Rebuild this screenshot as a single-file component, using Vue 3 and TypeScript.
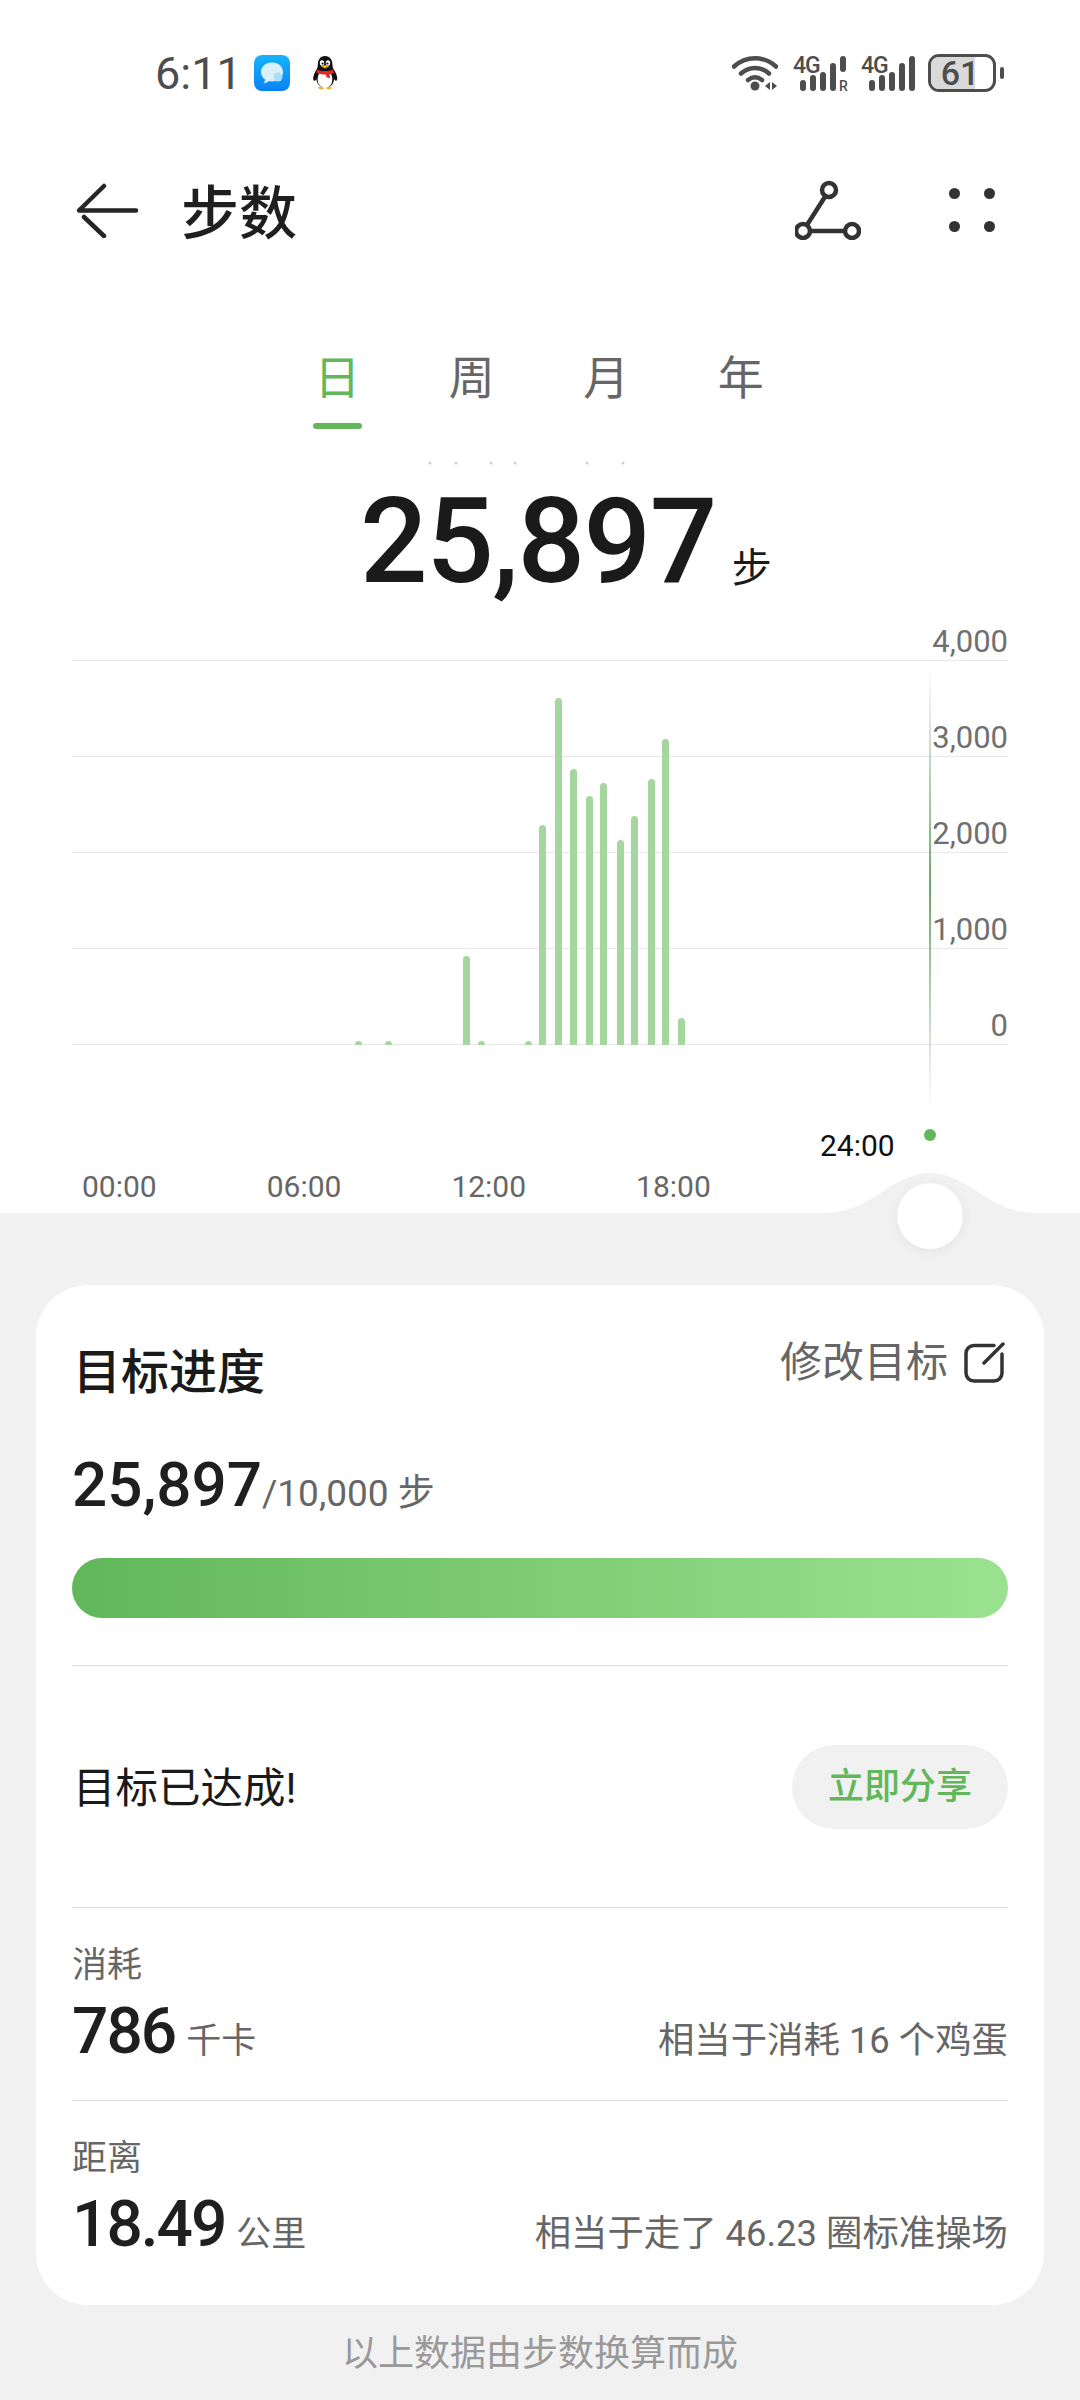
<template>
  <div class="page">
    <section class="top">
      <div class="status">
        <div class="status-left">
          <span class="time">6:11</span>
          <svg class="msg" width="36" height="36" viewBox="0 0 36 36">
            <defs>
              <linearGradient id="msgbg" x1="0" y1="0" x2="0" y2="1">
                <stop offset="0" stop-color="#16b4fb" />
                <stop offset="1" stop-color="#0a82f5" />
              </linearGradient>
            </defs>
            <rect width="36" height="36" rx="8" fill="url(#msgbg)" />
            <path d="M18 7.500c6.400 0 11 3.900 11 9.500s-4.600 9.500-11 9.500c-1 0-2-.1-3-.4-1.300 1.200-3.200 2-5.500 2.200 1-1.100 1.600-2.300 1.700-3.700C8.700 22.900 7 20.200 7 17c0-5.600 4.600-9.500 11-9.500z" fill="#d8f1fd" />
            <circle cx="24" cy="22" r="4.500" fill="#a9dffa" />
          </svg>
          <svg class="qq" width="28" height="36" viewBox="0 0 28 36">
            <path d="M14 1c5 0 7.500 4 7.500 9 0 1.500.3 2.500 1 4 2 3 4.500 8 3.500 11-.6 1.500-2 .5-2.800-.8-.5 3.500-2.200 6-4.200 7.300H9.500c-2-1.300-3.700-3.800-4.200-7.300C4.500 25.500 3 26.500 2.400 25 1.400 22 4 17 5.800 14c.7-1.500 1-2.500 1-4C6.800 5 9 1 14 1z" fill="#111" />
            <path d="M8.500 18c1-1.500 10-1.500 11 0 2 3 2.500 8 .8 11-1.300 2.500-3.800 3.300-6.300 3.300s-5-.8-6.300-3.300c-1.700-3-1.200-8 .8-11z" fill="#fff" />
            <ellipse cx="11" cy="8" rx="2.200" ry="2.800" fill="#fff" />
            <ellipse cx="17" cy="8" rx="2.200" ry="2.800" fill="#fff" />
            <circle cx="11.500" cy="8.500" r="1.100" fill="#111" />
            <circle cx="16.500" cy="8.500" r="1.100" fill="#111" />
            <path d="M9.500 11c2-1 7-1 9 0l-4.500 2.600z" fill="#f5b31f" />
            <path d="M6 14.500c4 2 12 2 16 0l1 3.300c-1.300.8-3 1.300-4.500 1.500l.5 4-3.500-1-.7-2.800c-3 .2-6.800-.3-9.300-1.700z" fill="#e8262a" />
            <path d="M7 32.500c2-1.200 5-1 6 .8-1 1.700-5 1.700-6-.8zM21 32.500c-2-1.200-5-1-6 .8 1 1.700 5 1.700 6-.8z" fill="#f5b31f" />
          </svg>
        </div>
        <div class="status-right">
          <svg class="wifi" width="46" height="36" viewBox="0 0 46 36">
            <path d="M2 11.500C14 .5 32 .5 44 11.500M9 18.500c8.500-7.500 19.500-7.500 28 0M16 25c4.500-3.500 9.500-3.500 14 0" fill="none" stroke="#4d4d4d" stroke-width="4.500" stroke-linecap="round" />
            <circle cx="23" cy="31" r="4.500" fill="#4d4d4d" />
            <path d="M38 27v8l-5-4zM40 27v8l5-4z" fill="#4d4d4d" />
          </svg>
          <svg width="56" height="45" viewBox="0 -4 56 45">
            <text x="0" y="18" class="net">4G</text>
            <rect x="7" y="25" width="6" height="11" rx="3" class="sig" />
            <rect x="17" y="20" width="6" height="16" rx="3" class="sig" />
            <rect x="27" y="17" width="6" height="19" rx="3" class="sig" />
            <rect x="37" y="8" width="6" height="28" rx="3" class="sig" />
            <rect x="47" y="1" width="6" height="16" rx="3" class="sig" />
            <text x="46" y="36" class="net-r">R</text>
          </svg>
          <svg width="55" height="45" viewBox="0 -4 55 45">
            <text x="0" y="18" class="net">4G</text>
            <rect x="8" y="25" width="6" height="11" rx="3" class="sig" />
            <rect x="18" y="20" width="6" height="16" rx="3" class="sig" />
            <rect x="28" y="17" width="6" height="19" rx="3" class="sig" />
            <rect x="38" y="8" width="6" height="28" rx="3" class="sig" />
            <rect x="48" y="1" width="6" height="35" rx="3" class="sig" />
          </svg>
          <div class="battery">
            <div class="battery-body">
              <div class="battery-fill"></div>
              <span class="battery-num">61</span>
            </div>
            <div class="battery-nub"></div>
          </div>
        </div>
      </div>

      <header class="nav">
        <svg class="back" width="62" height="56" viewBox="0 0 62 56">
          <path d="M27 4 2 28.500h57M7 35l20 19" fill="none" stroke="#262626" stroke-width="4.500" stroke-linecap="round" stroke-linejoin="round" />
        </svg>
        <h1 class="title">步数</h1>
        <svg class="share" width="66" height="60" viewBox="0 0 66 60">
          <g fill="none" stroke="#333" stroke-width="4.500">
            <circle cx="34" cy="10" r="7" />
            <circle cx="8" cy="51" r="7" />
            <circle cx="57" cy="51" r="7" />
            <path d="M30.500 16 12 45M15 51h35" />
          </g>
        </svg>
        <div class="more">
          <i v-for="n in 4" :key="n"></i>
        </div>
      </header>

      <nav class="tabs">
        <div v-for="(t, i) in tabs" :key="t" class="tab" :class="{ active: i === 0 }">{{ t }}</div>
      </nav>

      <svg class="clipped" width="204" height="4" viewBox="0 0 204 4">
        <circle v-for="x in clippedDots" :key="x" :cx="x" cy="2" r="1.500" fill="#cfcfcf" />
      </svg>

      <div class="total">
        <span class="total-num">25,897</span>
        <span class="total-unit">步</span>
      </div>

      <div class="plot">
        <div v-for="l in yLabels" :key="l" class="grid-row">
          <span>{{ l }}</span>
        </div>
        <div class="bars">
          <i
            v-for="b in bars"
            :key="b.x"
            class="bar"
            :style="{ left: b.x - 72 - 3.5 + 'px', height: 1045 - b.top + 'px' }"
          ></i>
        </div>
        <div class="cursor"></div>
        <div class="cursor-dot"></div>
        <div class="cursor-time">24:00</div>
      </div>

      <div class="hours">
        <span v-for="h in hours" :key="h">{{ h }}</span>
      </div>

      <svg class="hump" width="240" height="42" viewBox="0 0 240 42">
        <path d="M0 41h13c27 0 44-11 62-23C92 7 105 1 120 1s28 6 45 17c18 12 35 23 62 23h13v1H0z" fill="#f1f1f1" />
      </svg>
      <div class="knob"></div>
    </section>

    <section class="card">
      <div class="goal-head">
        <h2 class="goal-title">目标进度</h2>
        <div class="goal-edit">
          <span>修改目标</span>
          <svg width="42" height="42" viewBox="0 0 42 42">
            <path d="M31 3.500H11a8 8 0 0 0-8 8V31a8 8 0 0 0 8 8h20a8 8 0 0 0 8-8V12" fill="none" stroke="#333" stroke-width="3.500" stroke-linecap="round" />
            <path d="M40 2 21 21" fill="none" stroke="#333" stroke-width="3.500" stroke-linecap="round" />
          </svg>
        </div>
      </div>

      <div class="goal-num">
        <span class="goal-big">25,897</span><span class="goal-small">/10,000 步</span>
      </div>

      <div class="progress"></div>

      <div class="reached">
        <span class="reached-text">目标已达成!</span>
        <div class="share-btn">立即分享</div>
      </div>

      <div v-for="s in stats" :key="s.label" class="stat">
        <div class="stat-label">{{ s.label }}</div>
        <div class="stat-row">
          <div>
            <span class="stat-val">{{ s.value }}</span>
            <span class="stat-unit">{{ s.unit }}</span>
          </div>
          <span class="stat-note">{{ s.note }}</span>
        </div>
      </div>
    </section>

    <footer class="foot">以上数据由步数换算而成</footer>
  </div>
</template>

<script setup lang="ts">
const tabs: string[] = ['日', '周', '月', '年']
const yLabels: string[] = ['4,000', '3,000', '2,000', '1,000', '0']
const hours: string[] = ['00:00', '06:00', '12:00', '18:00']
const clippedDots: number[] = [2, 28, 63, 87, 159, 195]

// x 是柱子中心, top 是柱顶
const bars: { x: number; top: number }[] = [
  { x: 358, top: 1041 },
  { x: 388, top: 1041 },
  { x: 466, top: 956 },
  { x: 481, top: 1041 },
  { x: 528, top: 1041 },
  { x: 542, top: 825 },
  { x: 558.5, top: 698 },
  { x: 573, top: 769 },
  { x: 589.5, top: 796 },
  { x: 603.5, top: 783 },
  { x: 620, top: 840 },
  { x: 634.5, top: 816 },
  { x: 651, top: 779 },
  { x: 665, top: 739 },
  { x: 681, top: 1018 },
]

const stats = [
  { label: '消耗', value: '786', unit: '千卡', note: '相当于消耗 16 个鸡蛋' },
  { label: '距离', value: '18.49', unit: '公里', note: '相当于走了 46.23 圈标准操场' },
]
</script>

<style>
html,
body {
  margin: 0;
  background: #f1f1f1;
}
</style>

<style scoped>
.page {
  width: 1080px;
  height: 2400px;
  overflow: hidden;
  background: #f1f1f1;
  font-family: Roboto, "Noto Sans CJK SC", sans-serif;
  color: #1a1a1a;
}

.top {
  position: relative;
  height: 1213px;
  background: #fff;
}

.status {
  height: 146px;
  display: flex;
  align-items: center;
  justify-content: space-between;
  padding: 0 76px 0 155px;
  box-sizing: border-box;
}
.status-left {
  display: flex;
  align-items: center;
}
.time {
  font-size: 45px;
  color: #4d4d4d;
  line-height: 1;
}
.msg {
  margin-left: 12px;
}
.qq {
  margin-left: 21px;
}
.status-right {
  display: flex;
  align-items: center;
  gap: 12px;
}
.wifi {
  margin-right: 3px;
}
.net {
  font: 500 23px Roboto, sans-serif;
  fill: #4d4d4d;
  letter-spacing: -1px;
}
.net-r {
  font: 500 14px Roboto, sans-serif;
  fill: #4d4d4d;
}
.sig {
  fill: #4d4d4d;
}
.battery {
  display: flex;
  align-items: center;
  gap: 4px;
}
.battery-body {
  position: relative;
  width: 68px;
  height: 38px;
  box-sizing: border-box;
  border: 3.500px solid #4d4d4d;
  border-radius: 11px;
  overflow: hidden;
  display: flex;
  align-items: center;
  justify-content: center;
}
.battery-fill {
  position: absolute;
  left: 0;
  top: 0;
  bottom: 0;
  width: 44px;
  background: #d9d9d9;
}
.battery-num {
  position: relative;
  font-size: 34px;
  font-weight: 500;
  color: #4d4d4d;
  line-height: 1;
  margin-right: 4px;
}
.battery-nub {
  width: 4px;
  height: 12px;
  border-radius: 2px;
  background: #4d4d4d;
}

.nav {
  height: 128px;
  display: flex;
  align-items: center;
  padding-left: 77px;
}
.title {
  margin: 8px 0 0 42px;
  font-size: 58px;
  font-weight: 500;
  color: #1f1f1f;
  line-height: 1;
}
.share {
  margin-left: auto;
}
.more {
  width: 46px;
  height: 44px;
  margin: 0 85px 0 88px;
  display: grid;
  grid-template-columns: 11px 11px;
  justify-content: space-between;
  align-content: space-between;
}
.more i {
  width: 11px;
  height: 11px;
  border-radius: 50%;
  background: #333;
}

.tabs {
  margin-top: 74px;
  height: 82px;
  display: flex;
  padding-left: 270px;
}
.tab {
  position: relative;
  width: 134.5px;
  text-align: center;
  font-size: 46px;
  line-height: 60px;
  color: #666;
}
.tab.active {
  color: #62b75a;
}
.tab.active::after {
  content: '';
  position: absolute;
  left: 43px;
  right: 43px;
  top: 75px;
  height: 6px;
  border-radius: 3px;
  background: #62b75a;
}

.clipped {
  display: block;
  margin: 31px 0 0 428px;
}

.total {
  margin-top: 17px;
  height: 119px;
  display: flex;
  align-items: baseline;
  padding-left: 360px;
  gap: 16px;
}
.total-num {
  font-size: 119px;
  font-weight: 500;
  letter-spacing: -1.5px;
  line-height: 119px;
  color: #1a1a1a;
}
.total-unit {
  font-size: 40px;
  line-height: 1;
}

.plot {
  position: relative;
  margin: 22px 72px 0;
}
.grid-row {
  height: 96px;
  box-sizing: border-box;
  border-bottom: 1.500px solid #e9e9e9;
  display: flex;
  justify-content: flex-end;
  align-items: flex-end;
  font-size: 31px;
  line-height: 36px;
  color: #707070;
}
.grid-row:first-child {
  height: 38px;
}
.bars {
  position: absolute;
  left: 0;
  right: 0;
  bottom: 0;
}
.bar {
  position: absolute;
  bottom: 0;
  width: 7px;
  border-radius: 3.500px 3.500px 0 0;
  background: #a6d6a0;
}
.cursor {
  position: absolute;
  left: 857px;
  top: 45px;
  width: 2px;
  height: 440px;
  background: linear-gradient(to bottom, rgba(98, 183, 90, 0), #6aa864 50%, rgba(98, 183, 90, 0));
}
.cursor-dot {
  position: absolute;
  left: 852px;
  top: 506px;
  width: 12px;
  height: 12px;
  border-radius: 50%;
  background: #62b75a;
}
.cursor-time {
  position: absolute;
  left: 748px;
  top: 504px;
  font-size: 30px;
  line-height: 38px;
  color: #111;
}

.hours {
  margin-top: 123px;
  padding-left: 82px;
  display: grid;
  grid-template-columns: repeat(4, 184.7px);
  font-size: 30px;
  line-height: 38px;
  color: #666;
}

.hump {
  position: absolute;
  left: 810px;
  bottom: -1px;
}
.knob {
  position: absolute;
  left: 897px;
  top: 1183px;
  width: 66px;
  height: 66px;
  border-radius: 50%;
  background: #fff;
  box-shadow: 0 2px 12px rgba(0, 0, 0, 0.06);
  z-index: 2;
}

.card {
  margin: 72px 36px 0;
  height: 1020px;
  box-sizing: border-box;
  padding: 0 36px;
  background: #fff;
  border-radius: 52px;
}
.goal-head {
  height: 118px;
  display: flex;
  justify-content: space-between;
  align-items: flex-start;
  padding-top: 50px;
}
.goal-title {
  margin: 8px 0 0 1px;
  font-size: 48px;
  font-weight: 500;
  line-height: 60px;
  color: #1a1a1a;
}
.goal-edit {
  display: flex;
  align-items: center;
  gap: 15px;
  font-size: 42px;
  line-height: 56px;
  color: #666;
  margin-right: 3px;
}
.goal-num {
  margin-top: -7px;
  height: 78px;
  display: flex;
  align-items: baseline;
}
.goal-big {
  font-size: 62px;
  line-height: 78px;
  font-weight: 500;
  color: #1f1f1f;
}
.goal-small {
  font-size: 37px;
  color: #666;
}
.progress {
  margin-top: 34px;
  height: 60px;
  border-radius: 30px;
  background: linear-gradient(to right, #62b75a, #9be290);
}
.reached {
  margin-top: 47px;
  height: 243px;
  box-sizing: border-box;
  border-top: 1.500px solid #d9d9d9;
  border-bottom: 1.500px solid #d9d9d9;
  display: flex;
  align-items: center;
  justify-content: space-between;
}
.reached-text {
  font-size: 42.5px;
  color: #1a1a1a;
  padding: 0 0 4px 1px;
}
.share-btn {
  width: 216px;
  height: 84px;
  border-radius: 42px;
  background: #f1f1f1;
  color: #62b75a;
  font-size: 36px;
  font-weight: 500;
  line-height: 84px;
  text-align: center;
}
.stat {
  height: 193px;
  box-sizing: border-box;
  padding-top: 36px;
  border-bottom: 1.500px solid #d9d9d9;
}
.stat:last-child {
  border-bottom: 0;
}
.stat-label {
  font-size: 35px;
  line-height: 44px;
  color: #666;
}
.stat-row {
  display: flex;
  justify-content: space-between;
  align-items: baseline;
  margin-top: 6px;
}
.stat-val {
  font-size: 64px;
  font-weight: 500;
  letter-spacing: -2px;
  line-height: 76px;
  color: #1f1f1f;
}
.stat-unit {
  font-size: 35px;
  color: #666;
  margin-left: 11px;
}
.stat-note {
  font-size: 36.4px;
  color: #666;
}

.foot {
  margin-top: 25px;
  text-align: center;
  font-size: 36px;
  line-height: 48px;
  color: #999;
}
</style>
